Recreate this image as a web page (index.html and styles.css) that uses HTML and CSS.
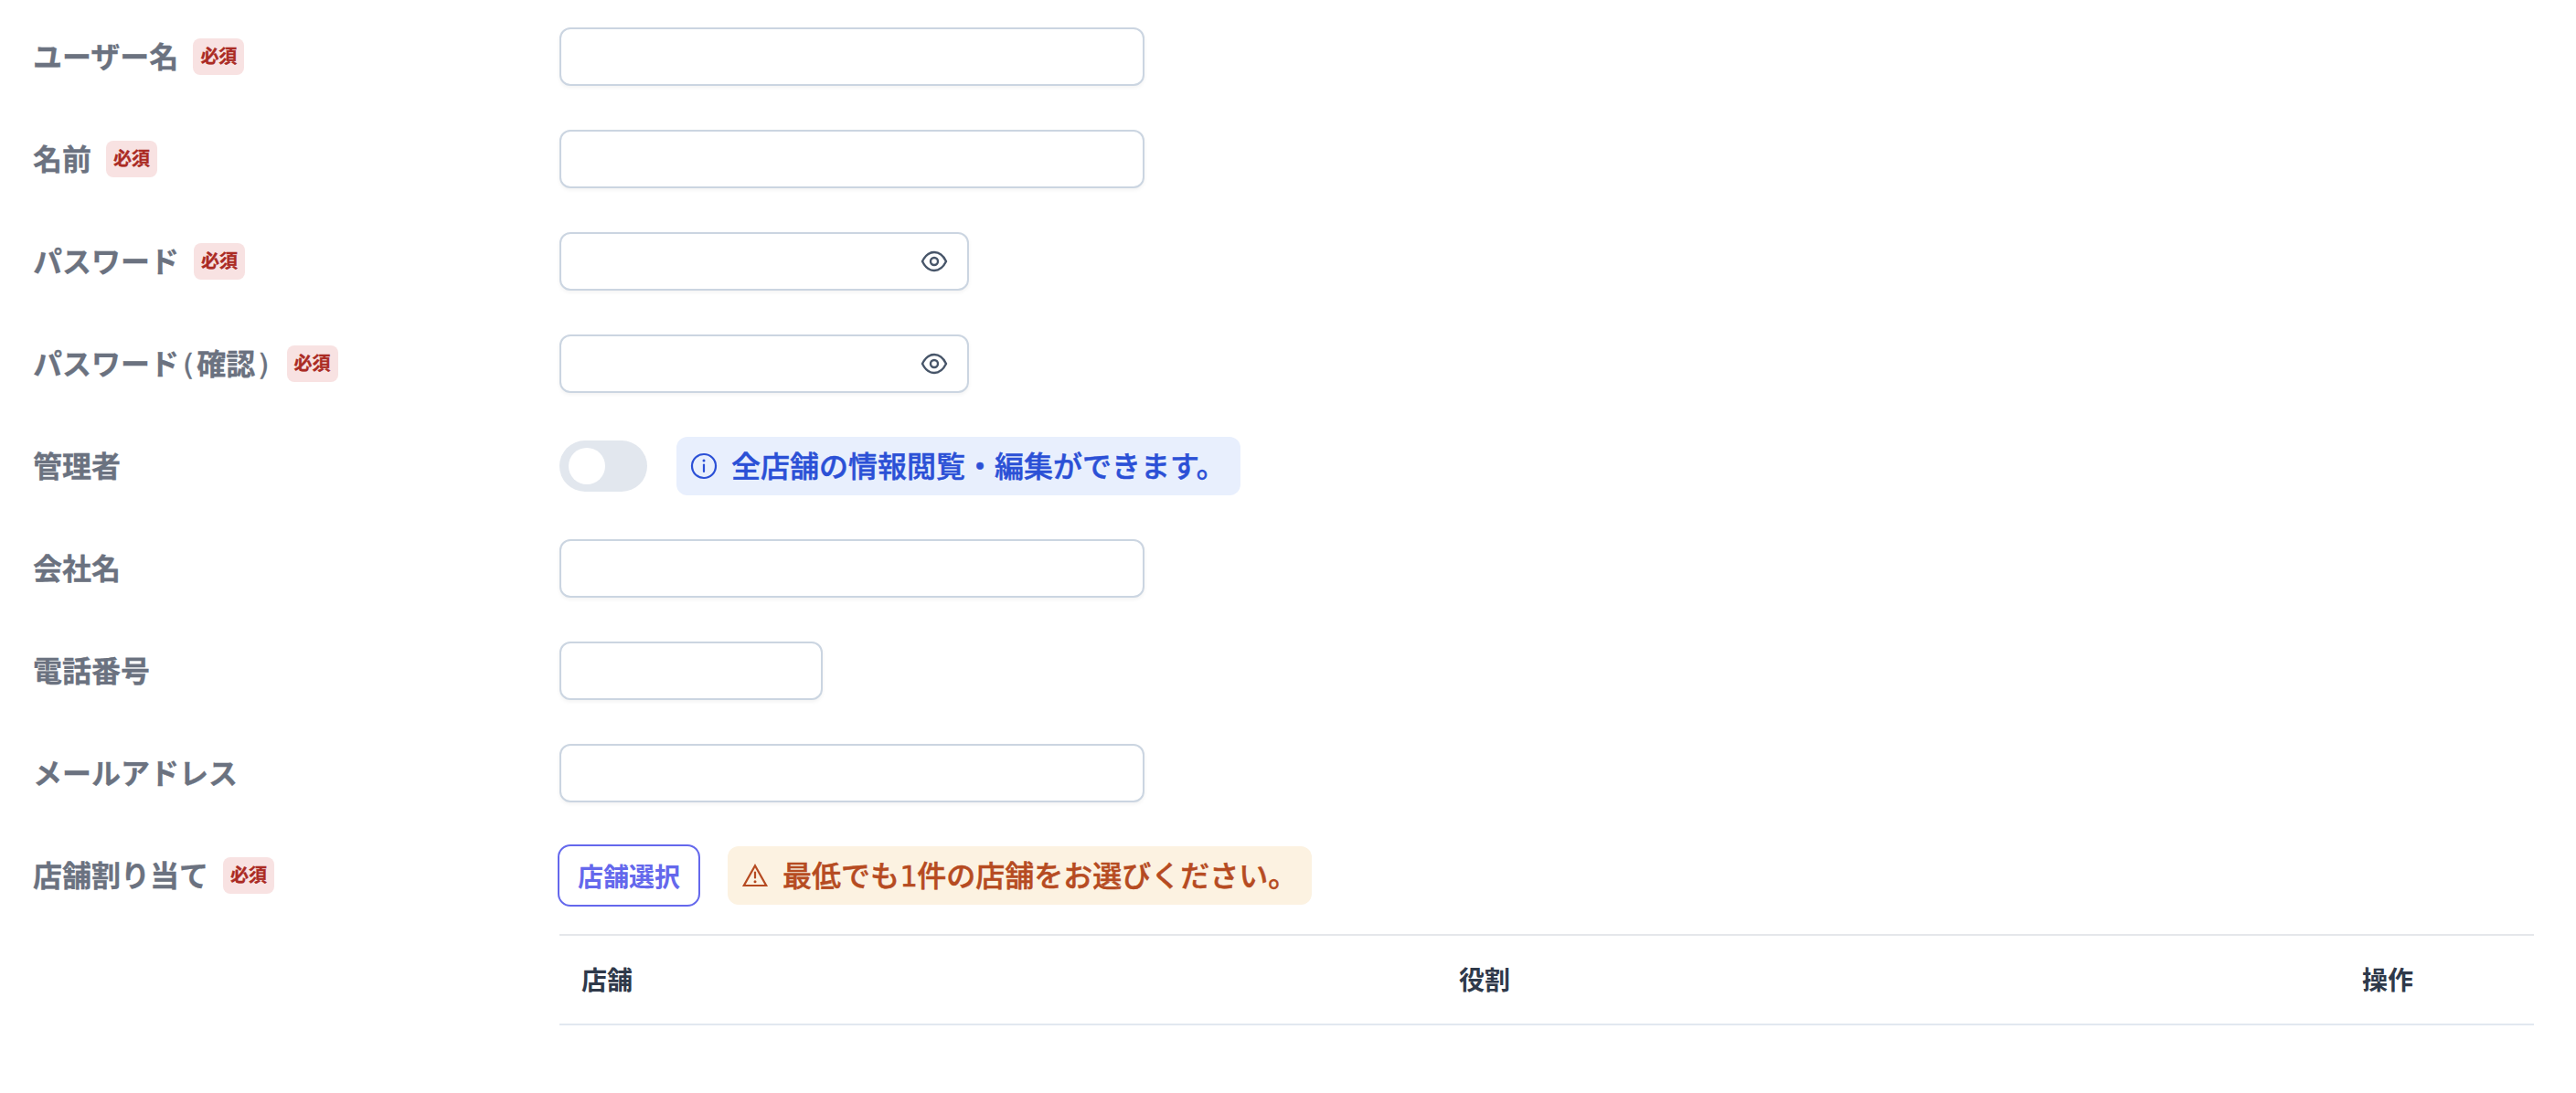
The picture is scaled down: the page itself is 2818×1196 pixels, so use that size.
FILE: index.html
```html
<!DOCTYPE html>
<html lang="ja">
<head>
<meta charset="utf-8">
<title>ユーザー登録</title>
<link rel="stylesheet" href="styles.css">
</head>
<body>
<form class="form">
  <div class="row"><div class="label">ユーザー名<span class="badge">必須</span></div><input class="input" type="text" aria-label="ユーザー名"></div>
  <div class="row"><div class="label">名前<span class="badge">必須</span></div><input class="input" type="text" aria-label="名前"></div>
  <div class="row"><div class="label">パスワード<span class="badge">必須</span></div>
    <div class="input password"><svg class="eye" viewBox="0 0 32 32"><path d="M3 16C9.500 2.700 22.500 2.700 29 16C22.500 29.300 9.500 29.300 3 16Z"/><circle cx="16" cy="16" r="4"/></svg></div></div>
  <div class="row"><div class="label tight"><span>パスワード<span class="mono">(</span>確認<span class="mono">)</span></span><span class="badge">必須</span></div>
    <div class="input password"><svg class="eye" viewBox="0 0 32 32"><path d="M3 16C9.500 2.700 22.500 2.700 29 16C22.500 29.300 9.500 29.300 3 16Z"/><circle cx="16" cy="16" r="4"/></svg></div></div>
  <div class="row"><div class="label">管理者</div>
    <div class="toggle"><span class="knob"></span></div>
    <div class="note info"><svg class="icon" viewBox="0 0 32 32"><circle cx="16" cy="16" r="13"/><path d="M16 14.500V22"/><circle class="dot" cx="16" cy="10" r="1.500"/></svg><span class="message">全店舗の情報閲覧・編集ができます。</span></div></div>
  <div class="row"><div class="label">会社名</div><input class="input" type="text" aria-label="会社名"></div>
  <div class="row"><div class="label">電話番号</div><input class="input short" type="text" aria-label="電話番号"></div>
  <div class="row"><div class="label">メールアドレス</div><input class="input" type="text" aria-label="メールアドレス"></div>
  <div class="row"><div class="label">店舗割り当て<span class="badge">必須</span></div>
    <button class="select" type="button">店舗選択</button>
    <div class="note warn"><svg class="icon" viewBox="0 0 32 32"><path class="sharp" d="M16 5.300L28.200 27H3.800Z"/><path d="M16 12.500V18.500"/><circle class="dot" cx="16" cy="22.700" r="1.500"/></svg><span class="message">最低でも<span class="mono">1</span>件の店舗をお選びください。</span></div></div>
</form>
<div class="table"><span>店舗</span><span>役割</span><span>操作</span></div>
</body>
</html>
```
FILE: styles.css
```css
* { box-sizing: border-box; }
body {
  margin: 0;
  padding: 30px 46px 0 36px;
  background: #fff;
  font-family: "Noto Sans CJK JP", sans-serif;
  font-size: 32px;
  line-height: 48px;
}
.form { display: flex; flex-direction: column; gap: 48px; }
.row { display: flex; align-items: center; height: 64px; }
.label {
  display: flex;
  align-items: center;
  gap: 16px;
  flex: none;
  width: 576px;
  padding-bottom: 4px;
  color: #6b7280;
  font-weight: 600;
  -webkit-text-stroke: .3px currentColor;
}
.tight { gap: 15px; }
.mono {
  font-family: "DejaVu Sans Mono", monospace;
  font-weight: 400;
  line-height: 1;
}
.badge {
  width: 56px;
  height: 40px;
  margin-top: 4px;
  border-radius: 8px;
  background: #f8e2e2;
  color: #ab2b24;
  font-size: 20px;
  line-height: 38px;
  font-weight: 600;
  text-align: center;
}
.input {
  width: 640px;
  height: 64px;
  border: 2px solid #cbd5e1;
  border-radius: 12px;
  background: #fff;
  box-shadow: 0 2px 4px rgba(0, 0, 0, .05);
}
.password {
  width: 448px;
  display: flex;
  align-items: center;
  justify-content: flex-end;
  padding-right: 20px;
}
.short { width: 288px; }
.eye, .icon {
  width: 32px;
  height: 32px;
  flex: none;
  fill: none;
  stroke: currentColor;
  stroke-width: 2.200;
  stroke-linejoin: round;
  stroke-linecap: round;
}
.eye { color: #475569; stroke-width: 2.400; }
.sharp { stroke-linejoin: miter; }
.dot { fill: currentColor; stroke: none; }
.toggle { width: 96px; height: 56px; padding: 8px 10px; border-radius: 28px; background: #e2e7ee; }
.knob { display: block; width: 40px; height: 40px; border-radius: 50%; background: #fff; }
.note {
  display: flex;
  align-items: center;
  gap: 14px;
  height: 64px;
  padding: 0 16px 0 14px;
  border-radius: 12px;
  font-weight: 500;
  white-space: nowrap;
}
.message { padding-bottom: 4px; -webkit-text-stroke: .5px currentColor; }
.info { margin-left: 32px; background: #e8effd; color: #2b50d6; }
.warn { margin-left: 30px; background: #fcf2e1; color: #b64b21; }
.select {
  flex: none;
  width: 156px;
  height: 68px;
  margin-left: -2px;
  padding: 0;
  border: 2px solid #6468ec;
  border-radius: 14px;
  background: #fff;
  color: #6468ec;
  font: 600 28px/40px "Noto Sans CJK JP", sans-serif;
}
.table {
  display: grid;
  grid-template-columns: 960px 988px 1fr;
  align-items: center;
  height: 100px;
  margin: 32px 0 0 576px;
  padding: 0 0 2px 24px;
  border-top: 2px solid #e5e7eb;
  border-bottom: 2px solid #e2e8f0;
  color: #2f394a;
  font-size: 28px;
  font-weight: 600;
}
```
